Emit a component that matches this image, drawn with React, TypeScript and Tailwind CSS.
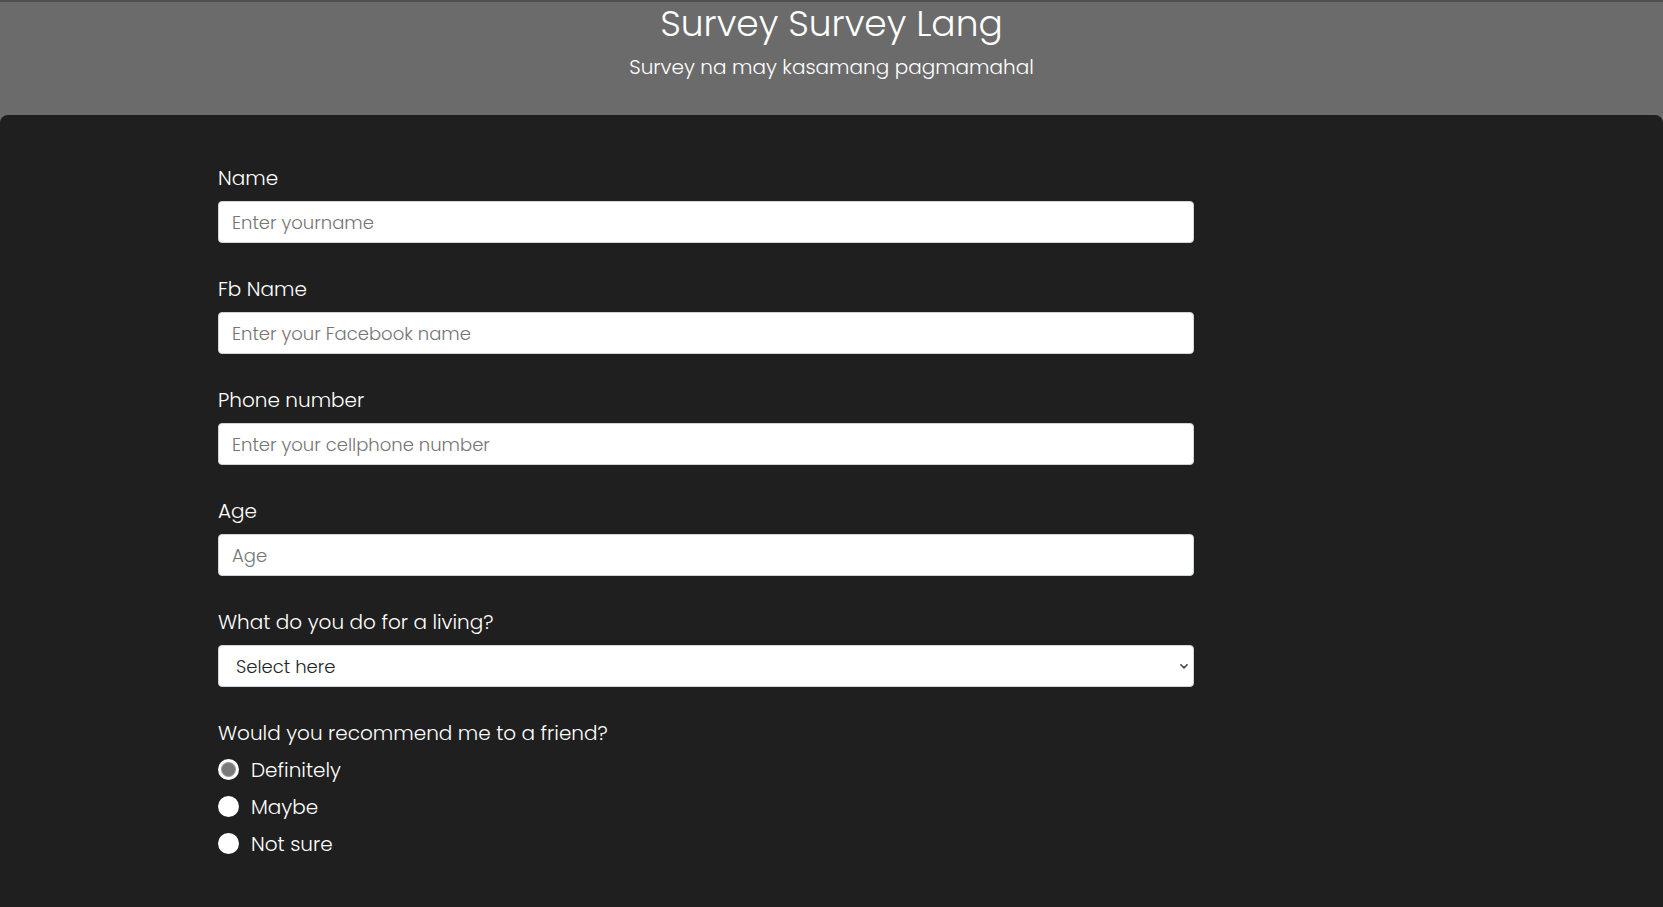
import React, { useState } from 'react';

const font = { fontFamily: '"Poppins", "Open Sans", "Noto Sans", sans-serif' };

const TextField = ({ label, placeholder }: { label: string; placeholder: string }) => (
    <div className="flex flex-col mb-[31px]">
        <label className="text-[20px] leading-[30px] font-light text-white mb-[8px]">{label}</label>
        <input
            type="text"
            placeholder={placeholder}
            className="h-[42px] w-full rounded-[4px] border border-[#ced4da] bg-white px-[13px] text-[18px] font-light text-[#212529] placeholder:text-[#757575] outline-none"
        />
    </div>
);

export default function App() {
    const [pick, setPick] = useState('Definitely');
    const options = ['Definitely', 'Maybe', 'Not sure'];

    return (
        <div className="min-h-screen bg-[#6b6b6b]" style={font}>
            <header className="h-[115px] border-t-2 border-[#505050] flex flex-col items-center">
                <h1 className="text-[36px] leading-[44px] font-light text-white">Survey Survey Lang</h1>
                <p className="text-[20px] leading-[28px] font-light text-white mt-[7px]">Survey na may kasamang pagmamahal</p>
            </header>

            <main className="bg-[#1f1f1f] rounded-t-[8px] min-h-[800px] pt-[48px]">
                <form className="ml-[218px] w-[976px]">
                    <TextField label="Name" placeholder="Enter yourname" />
                    <TextField label="Fb Name" placeholder="Enter your Facebook name" />
                    <TextField label="Phone number" placeholder="Enter your cellphone number" />
                    <TextField label="Age" placeholder="Age" />

                    <div className="flex flex-col mb-[31px]">
                        <label className="text-[20px] leading-[30px] font-light text-white mb-[8px]">What do you do for a living?</label>
                        <div className="relative">
                            <select className="h-[42px] w-full appearance-none rounded-[4px] border border-[#ced4da] bg-white pl-[17px] text-[18px] font-light text-[#212529] outline-none">
                                <option>Select here</option>
                                <option>Student</option>
                                <option>Employed</option>
                            </select>
                            <svg className="pointer-events-none absolute right-[5px] top-[16px] w-[10px] h-[10px] text-[#444]" viewBox="0 0 16 16" fill="none" stroke="currentColor" strokeWidth="2.5" strokeLinecap="round" strokeLinejoin="round">
                                <path d="M3 6l5 5 5-5" />
                            </svg>
                        </div>
                    </div>

                    <div className="flex flex-col">
                        <label className="text-[20px] leading-[30px] font-light text-white mb-[3px]">Would you recommend me to a friend?</label>
                        {options.map((o) => (
                            <label key={o} className="flex items-center h-[37px] cursor-pointer" onClick={() => setPick(o)}>
                                <span className="w-[21px] h-[21px] rounded-full bg-white flex items-center justify-center shrink-0">
                                    {pick === o && <span className="w-[13px] h-[13px] rounded-full bg-[#7a7a7a] ring-1 ring-[#9a9a9a]" />}
                                </span>
                                <span className="ml-[12px] text-[20px] leading-[30px] font-light text-white">{o}</span>
                            </label>
                        ))}
                    </div>

                    <div className="mt-[39px]">
                        <label className="text-[20px] leading-[30px] font-light text-white">What would you like to see improved in the next survey?</label>
                    </div>
                </form>
            </main>
        </div>
    );
}
